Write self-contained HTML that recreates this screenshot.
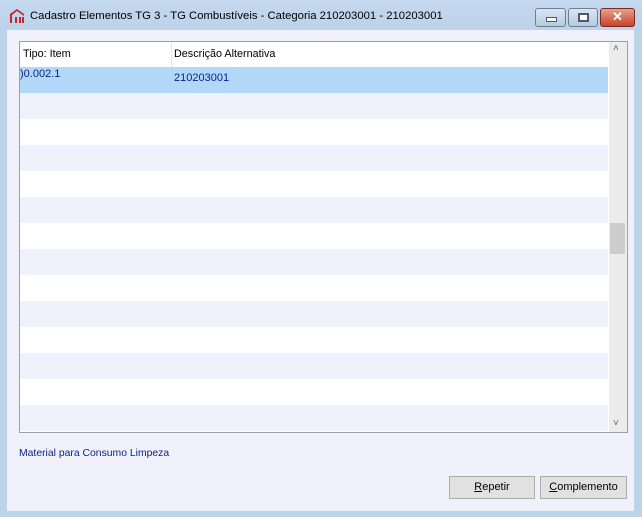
<!DOCTYPE html><html><head><style>
body{margin:0;width:642px;height:517px;background:#bcd3ea;font-family:"Liberation Sans",sans-serif;position:relative;overflow:hidden}
.a{position:absolute}
.title{left:30px;top:10px;font-size:11.3px;color:#000}
.client{left:7px;top:30px;width:627px;height:481px;background:#f0f1fb}
.list{left:19px;top:41px;width:607px;height:390px;border:1px solid #a0a0a0;background:#fff;overflow:hidden}
.row{position:absolute;left:0;width:588px;height:26px}
.t{background:#f0f2fb}
.hdr{font-size:10.8px;color:#000}
.wb{top:8px;height:17px;border:1px solid #6d7f95;border-radius:3px;background:linear-gradient(#dbe6f3,#b7c9de)}
.btn{top:476px;height:21px;border:1px solid #adadad;background:#e1e1e1;font-size:11px;text-align:center;line-height:21px;color:#000}
</style></head><body>
<div class="a" style="left:0;top:0;width:642px;height:30px;background:linear-gradient(#c4d8ee,#bcd3ea)"></div>
<svg class="a" style="left:9px;top:8px" width="16" height="16"><path d="M1 15V6L8 1L15 6V8L8 3L3 7V15Z" fill="#c0282d"/><rect x="6" y="9" width="2" height="6" fill="#c0282d"/><rect x="10" y="9" width="2" height="6" fill="#c0282d"/><rect x="13" y="9" width="2" height="6" fill="#c0282d"/></svg>
<div class="a title">Cadastro Elementos TG 3 - TG Combustíveis - Categoria 210203001 - 210203001</div>
<div class="a wb" style="left:535px;width:29px"><div class="a" style="left:10px;top:8px;width:9px;height:3px;background:#fff;border:1px solid #4a5a70"></div></div>
<div class="a wb" style="left:568px;width:28px"><div class="a" style="left:9px;top:4px;width:7px;height:5px;border:2px solid #4a5a70;background:#fff"></div></div>
<div class="a wb" style="left:600px;width:33px;border-color:#7a2a20;background:linear-gradient(#e8a08c,#c9432b)"><div class="a" style="left:11px;top:0px;color:#fff;font-weight:bold;font-size:13px">✕</div></div>
<div class="a client"></div>
<div class="a list">
<div class="row" style="top:0;height:25px;border-bottom:1px solid #f0f0f0"></div>
<div class="a" style="left:151px;top:0;width:1px;height:25px;background:#e5e5e5"></div>
<div class="a hdr" style="left:3px;top:6px">Tipo: Item</div>
<div class="a hdr" style="left:154px;top:6px">Descrição Alternativa</div>
<div class="row" style="top:25px;background:#b3d7f8"></div>
<div class="a" style="left:0;top:26px;font-size:11px;color:#0a1f8a">)0.002.1</div>
<div class="a" style="left:154px;top:30px;font-size:11px;color:#0a1f8a">210203001</div>
<div class="row t" style="top:51px"></div><div class="row t" style="top:103px"></div><div class="row t" style="top:155px"></div><div class="row t" style="top:207px"></div><div class="row t" style="top:259px"></div><div class="row t" style="top:311px"></div><div class="row t" style="top:363px"></div>
<div class="a" style="left:589px;top:0;width:18px;height:390px;background:#ececec"></div>
<div class="a" style="left:590px;top:181px;width:15px;height:31px;background:#cdcdcd"></div>
<div class="a" style="left:593px;top:1px;font-size:10px;color:#606060">˄</div>
<div class="a" style="left:593px;top:376px;font-size:10px;color:#606060">˅</div>
</div>
<div class="a" style="left:19px;top:448px;font-size:10.4px;color:#0a1f8a">Material para Consumo Limpeza</div>
<div class="a btn" style="left:449px;width:84px"><u>R</u>epetir</div>
<div class="a btn" style="left:540px;width:85px"><u>C</u>omplemento</div>
</body></html>
